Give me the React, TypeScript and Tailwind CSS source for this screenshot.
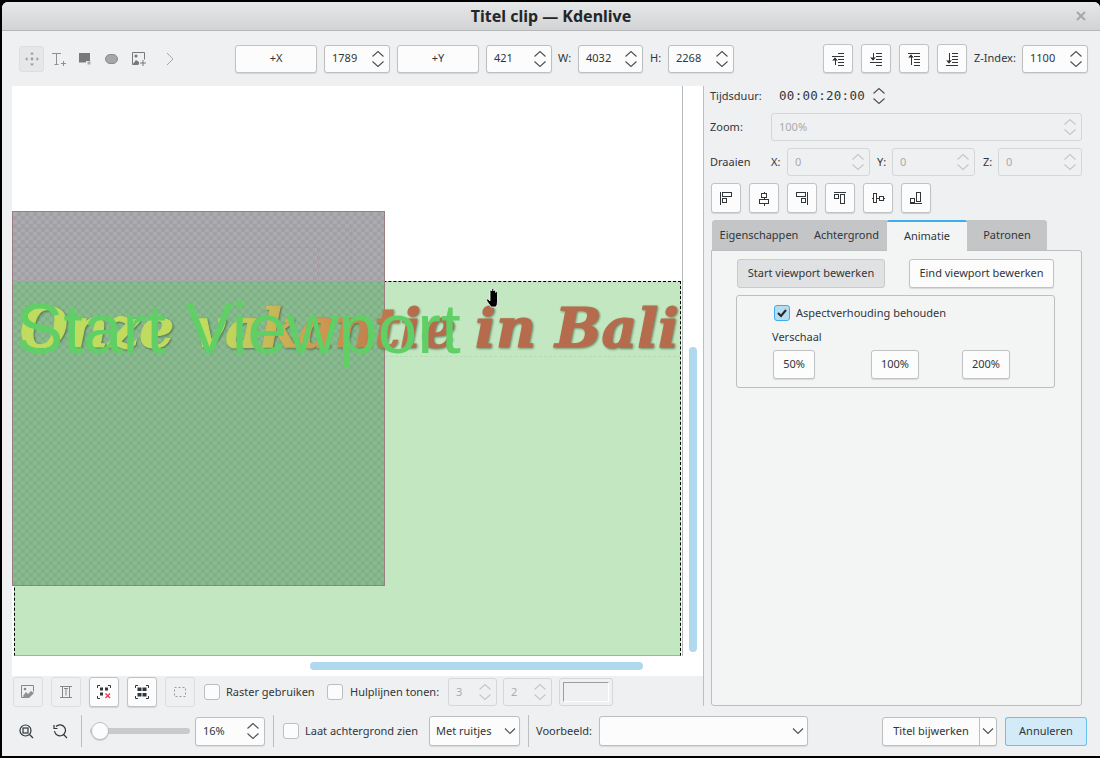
import type { ReactNode } from "react"

function Updown({ muted, tall }: { muted?: boolean; tall?: boolean }) {
  const color = muted ? "#c4c6c8" : "#4d4f50"
  return (
    <svg width="14" height={tall ? 22 : 20} viewBox={tall ? "0 0 14 22" : "0 0 14 20"} fill="none" stroke={color} strokeWidth="1.1" className="shrink-0">
      <path d="M1.5 7.5 7 2.5l5.5 5" />
      <path d={tall ? "M1.5 14.5 7 19.5l5.5-5" : "M1.5 12.5 7 17.5l5.5-5"} />
    </svg>
  )
}

function Chevron({ muted }: { muted?: boolean }) {
  return (
    <svg width="12" height="8" viewBox="0 0 12 8" fill="none" stroke={muted ? "#b9bbbd" : "#4d4f50"} strokeWidth="1.1">
      <path d="M1 1.5 6 6.5l5-5" />
    </svg>
  )
}

function Spin({ value, className, disabled }: { value: string; className: string; disabled?: boolean }) {
  return (
    <div
      className={`flex items-center justify-between rounded-[3px] border pl-[7px] pr-[4px] ${
        disabled ? "border-[#d4d6d7] bg-[#eff0f1] text-[#a9abad]" : "border-[#bcbebf] bg-[#fcfcfc] shadow-[0_1px_1px_rgba(0,0,0,0.08)]"
      } ${className}`}
    >
      <span>{value}</span>
      <Updown muted={disabled} />
    </div>
  )
}

function Button({ children, className }: { children?: ReactNode; className: string }) {
  return (
    <div className={`flex items-center justify-center rounded-[3px] border border-[#c0c2c3] bg-[#fcfcfc] shadow-[0_1px_1px_rgba(0,0,0,0.12)] ${className}`}>
      {children}
    </div>
  )
}

function FlatIcon({ children }: { children: ReactNode }) {
  return <div className="flex h-[30px] w-[30px] items-center justify-center rounded-[3px] border border-[#dcdedf] bg-[#eff0f1]">{children}</div>
}

function Checkbox({ className = "" }: { className?: string }) {
  return <div className={`h-[16px] w-[16px] shrink-0 rounded-[3px] border border-[#bcbebf] bg-[#fcfcfc] ${className}`} />
}

function Separator({ className }: { className: string }) {
  return <div className={`h-[32px] w-px bg-[#bcbebf] ${className}`} />
}

function Ico({ children, size = 18 }: { children: ReactNode; size?: number }) {
  return (
    <svg width={size} height={size} viewBox="0 0 18 18" fill="none" stroke="#31363b" strokeWidth="1" shapeRendering="crispEdges">
      {children}
    </svg>
  )
}

const alignIcons = [
  <><path d="M3.5 3v13" /><rect x="5.5" y="3.5" width="9" height="4" /><rect x="5.5" y="9.500" width="4" height="4" /></>,
  <><path d="M9 2.500v2M9 8.500v2M9 14.500v2" /><rect x="6.500" y="4.500" width="5" height="4" /><rect x="4.500" y="10.500" width="9" height="4" /></>,
  <><path d="M14.500 3v13" /><rect x="3.500" y="3.500" width="9" height="4" /><rect x="8.500" y="9.500" width="4" height="4" /></>,
  <><path d="M3 3.500h12" /><rect x="3.500" y="5.500" width="4" height="4" /><rect x="9.500" y="5.500" width="4" height="9" /></>,
  <><path d="M2.500 9.500h2M7.500 9.500h3M14.500 9.500h1" /><rect x="4.500" y="4.500" width="3" height="9" /><rect x="10.500" y="7.500" width="4" height="4" /></>,
  <><path d="M3 14.500h12" /><rect x="3.500" y="9.500" width="4" height="4" /><rect x="9.500" y="3.500" width="4" height="9" /></>,
]

const layerIcons = [
  { lines: "M9 3.500h6M3 6.500h12M9 9.500h6M9 12.500h6M9 15h6", arrow: "M6 15V8.500", head: "M3.800 10.500 6 7.800l2.200 2.700" },
  { lines: "M9 3.500h6M9 6.500h6M9 9.500h6M3 12.500h12M9 15h6", arrow: "M6 3v6.500", head: "M3.800 7.500 6 10.200l2.200-2.700" },
  { lines: "M3 3.500h12M9 6.500h6M9 9.500h6M9 12.500h6M9 15h6", arrow: "M6 15V5.500", head: "M3.800 7.500 6 4.800l2.200 2.700" },
  { lines: "M9 3.500h6M9 6.500h6M9 9.500h6M9 12.500h6M3 15h12", arrow: "M6 3v9.500", head: "M3.800 10.500 6 13.200l2.200-2.700" },
]

function Toolbar() {
  return (
    <div className="flex h-[55px] items-center pl-[17px]">
      <div className="flex h-[26px] w-[25px] items-center justify-center rounded-[3px] border border-[#dcdedf] bg-[#e6e7e8]">
        <svg width="14" height="14" viewBox="0 0 14 14" fill="#9b9d9f">
          <path d="M7 0l2 2.500H5zM7 14l-2-2.500h4zM0 7l2.500-2v4zM14 7l-2.500 2V5z" />
          <circle cx="7" cy="7" r="1.400" />
        </svg>
      </div>
      <svg width="16" height="16" viewBox="0 0 16 16" fill="none" stroke="#8e9092" className="ml-[7px]">
        <path d="M1 2.500h9M5.500 2.500v11M3.500 13.500h4M10 12.500h5M12.500 10v5" />
      </svg>
      <svg width="14" height="13" viewBox="0 0 14 13" className="ml-[11px]">
        <path d="M1 1h11v8H8v1.500H1z" fill="#77797b" />
        <rect x="9.500" y="9.500" width="3" height="3" fill="#a8aaac" />
      </svg>
      <div className="ml-[13px] h-[10px] w-[13px] rounded-full border border-[#8a8c8e] bg-[#a5a7a9]" />
      <svg width="14" height="14" viewBox="0 0 14 14" className="ml-[14px]">
        <path d="M.5.500h12v7M.5.500v12h6" fill="none" stroke="#77797b" />
        <circle cx="4" cy="4" r="1.600" fill="#77797b" />
        <path d="M1 12l3-4 3 2v2z" fill="#77797b" />
        <path d="M8 11h6M11 8v6" stroke="#77797b" fill="none" />
      </svg>
      <svg width="8" height="14" viewBox="0 0 8 14" fill="none" stroke="#a5a7a9" className="ml-[20px]">
        <path d="M1 1l6 6-6 6" />
      </svg>
      <Button className="ml-[61px] h-[28px] w-[82px]">+X</Button>
      <Spin value="1789" className="ml-[7px] h-[28px] w-[66px]" />
      <Button className="ml-[7px] h-[28px] w-[82px]">+Y</Button>
      <Spin value="421" className="ml-[7px] h-[28px] w-[66px]" />
      <span className="ml-[6px] w-[20px]">W:</span>
      <Spin value="4032" className="h-[28px] w-[65px]" />
      <span className="ml-[7px] w-[18px]">H:</span>
      <Spin value="2268" className="h-[28px] w-[66px]" />
      <div className="ml-[89px] flex gap-[8px]">
        {layerIcons.map((icon, i) => (
          <Button key={i} className="h-[29px] w-[30px]">
            <Ico>
              <path d={icon.lines} />
              <path d={icon.arrow} />
              <path shapeRendering="auto" d={icon.head} fill="#31363b" />
            </Ico>
          </Button>
        ))}
      </div>
      <span className="ml-[7px] w-[48px]">Z-Index:</span>
      <Spin value="1100" className="h-[28px] w-[66px]" />
    </div>
  )
}

function Canvas() {
  return (
    <div className="relative h-[590px] w-[691px] overflow-hidden bg-white">
      <div className="absolute left-[670px] top-0 h-[570px] w-px bg-[#b4b6b8]" />
      <div className="absolute left-[2px] top-[195px] h-[375px] w-[667px] border border-dashed border-black border-b-[#a3b3a3] bg-[#c3e8c1] [border-bottom-style:solid]" />
      <div className="absolute left-0 top-[125px] flex h-[375px] w-[373px] flex-col border border-[#9a7f80]">
        <div className="h-[69px] bg-[#acacb0] bg-[conic-gradient(#a0a0a5_25%,transparent_0_50%,#a0a0a5_0_75%,transparent_0)] bg-[length:8px_8px]" />
        <div className="flex-1 bg-[#8abb90] bg-[conic-gradient(#80b086_25%,transparent_0_50%,#80b086_0_75%,transparent_0)] bg-[length:8px_8px]" />
      </div>
      <div className="absolute left-[1px] top-[161px] h-[34px] w-[306px] border-r border-t border-[#a89298]/40" />
      <div className="absolute left-[1px] top-[142px] h-[53px] w-[339px] border-r border-t border-[#a89298]/30" />
      <div className="absolute left-[373px] top-[270px] w-[296px] border-t border-dashed border-[#b4dcb2]" />
      <div className="absolute left-[8px] top-[202px] bg-[linear-gradient(90deg,#c0dc5e_0%,#c0dc5e_30%,#cf9a50_45%,#b56b4c_60%,#b56b4c_100%)] bg-clip-text font-['DejaVu_Serif'] text-[55px] font-bold italic leading-[80px] whitespace-nowrap text-transparent drop-shadow-[1px_1px_1px_rgba(50,80,50,0.65)] [-webkit-text-stroke:1.2px_transparent]">
        Onze vakantie in Bali
      </div>
      <div className="absolute left-[4px] top-[198px] font-['Liberation_Sans'] text-[71px] leading-[90px] whitespace-nowrap text-[#5fcf66]">
        Start Viewport
      </div>
      <svg width="16" height="20" viewBox="0 0 16 20" className="absolute left-[474px] top-[202px]">
        <path
          d="M5 19c-1-2-4-5-4.500-7-.2-1 1-1.500 2-.5l1.500 1.500V3c0-1.500 1.700-1.500 1.800 0V1.500c0-1.500 2-1.500 2 0V3c0-1.500 1.900-1.500 1.900 0v1.500c0-1.300 1.800-1.300 1.800 0V14c0 2-.5 3.500-1.500 5z"
          fill="#000"
          stroke="#fff"
          strokeWidth="0.8"
        />
      </svg>
      <div className="absolute left-[677px] top-[261px] h-[305px] w-[8px] rounded-full bg-[#b0d8ef]" />
      <div className="absolute left-[298px] top-[576px] h-[8px] w-[333px] rounded-full bg-[#b0d8ef]" />
    </div>
  )
}

function CanvasTools() {
  return (
    <div className="flex h-[32px] items-center pl-[1px]">
      <FlatIcon>
        <svg width="14" height="14" viewBox="0 0 14 14">
          <path d="M.5.500h12v6M.5.500v12h6" fill="none" stroke="#85878a" />
          <path d="M2 11l3-4 2 2 3-3 3 2-5 5H3z" fill="#8e9092" />
          <circle cx="4" cy="4" r="1.300" fill="#85878a" />
        </svg>
      </FlatIcon>
      <div className="ml-[8px]">
        <FlatIcon>
          <svg width="14" height="14" viewBox="0 0 14 14" fill="none" stroke="#85878a">
            <path d="M3.500 1v12M10.500 1v12M1 1.500h12M1 12.500h12M5 3.500h4M7 3.500v7" />
          </svg>
        </FlatIcon>
      </div>
      <Button className="ml-[8px] h-[30px] w-[30px]">
        <svg width="14" height="14" viewBox="0 0 14 14" fill="none" stroke="#31363b">
          <path d="M.5 3V.5H3M11 .5h2.500V3M.5 11v2.500H3" />
          <rect x="3.500" y="3" width="2" height="2" />
          <rect x="8.500" y="3" width="2" height="2" />
          <rect x="3.500" y="8" width="2" height="2" />
          <path d="M8.500 8.500l4.500 4.500M13 8.500l-4.500 4.500" stroke="#ea3b52" strokeWidth="1.300" />
        </svg>
      </Button>
      <Button className="ml-[8px] h-[30px] w-[30px]">
        <svg width="14" height="14" viewBox="0 0 14 14" fill="none" stroke="#31363b">
          <path d="M.5 3V.5H3M11 .5h2.500V3M.5 11v2.500H3M11 13.500h2.500V11" />
          <rect x="3" y="3" width="3" height="2.500" fill="#31363b" />
          <rect x="8" y="3" width="3" height="2.500" fill="#31363b" />
          <rect x="3" y="8.500" width="3" height="2.500" fill="#31363b" />
          <rect x="8" y="8.500" width="3" height="2.500" fill="#31363b" />
        </svg>
      </Button>
      <div className="ml-[8px]">
        <FlatIcon>
          <svg width="14" height="14" viewBox="0 0 14 14" fill="none" stroke="#9b9d9f" strokeDasharray="2 2">
            <rect x="1.500" y="2.500" width="11" height="9" />
          </svg>
        </FlatIcon>
      </div>
      <Checkbox className="ml-[9px]" />
      <span className="ml-[6px] w-[101px]">Raster gebruiken</span>
      <Checkbox />
      <span className="ml-[7px] w-[98px]">Hulplijnen tonen:</span>
      <Spin value="3" disabled className="h-[28px] w-[49px]" />
      <Spin value="2" disabled className="ml-[6px] h-[28px] w-[49px]" />
      <div className="ml-[7px] flex h-[28px] w-[54px] items-center justify-center rounded-[3px] border border-[#d4d6d7]">
        <div className="h-[20px] w-[46px] border border-b-white border-l-[#9a9c9e] border-r-white border-t-[#9a9c9e] bg-[#eff0f1]" />
      </div>
    </div>
  )
}

function SidePanel() {
  return (
    <div className="flex h-[620px] w-[379px] flex-col border-l border-[#bcbebf] pl-[6px]">
      <div className="flex h-[20px] items-center">
        <span className="w-[69px]">Tijdsduur:</span>
        <span className="font-['DejaVu_Sans_Mono'] text-[12.500px] tracking-[0.3px]">00:00:20:00</span>
        <div className="ml-[7px]">
          <Updown />
        </div>
      </div>
      <div className="mt-[7px] flex h-[28px] items-center">
        <span className="w-[61px]">Zoom:</span>
        <Spin value="100%" disabled className="h-[28px] w-[311px]" />
      </div>
      <div className="mt-[7px] flex h-[28px] items-center">
        <span className="w-[61px]">Draaien</span>
        <span className="w-[16px]">X:</span>
        <Spin value="0" disabled className="h-[28px] w-[83px]" />
        <span className="ml-[7px] w-[15px]">Y:</span>
        <Spin value="0" disabled className="h-[28px] w-[83px]" />
        <span className="ml-[8px] w-[15px]">Z:</span>
        <Spin value="0" disabled className="h-[28px] w-[84px]" />
      </div>
      <div className="mt-[7px] flex gap-[8px] pl-[1px]">
        {alignIcons.map((icon, i) => (
          <Button key={i} className="h-[30px] w-[30px]">
            <Ico>{icon}</Ico>
          </Button>
        ))}
      </div>
      <div className="mt-[7px] flex h-[30px] pl-[2px]">
        <div className="flex w-[94px] items-center justify-center rounded-tl-[3px] bg-[#c3c5c7]">Eigenschappen</div>
        <div className="flex w-[81px] items-center justify-center bg-[#c3c5c7]">Achtergrond</div>
        <div className="z-10 -mb-px flex w-[80px] items-center justify-center rounded-t-[2px] border-t-2 border-[#3daee9] bg-[#f3f5f5]">Animatie</div>
        <div className="flex w-[80px] items-center justify-center rounded-tr-[3px] bg-[#c3c5c7]">Patronen</div>
      </div>
      <div className="ml-[1px] w-[371px] flex-1 rounded-b-[3px] rounded-tr-[3px] border border-[#bcbebf] bg-[#f3f5f5] pl-[25px] pt-[8px]">
        <div className="flex gap-[24px]">
          <div className="flex h-[29px] w-[148px] items-center justify-center rounded-[3px] border border-[#c8cacb] bg-[#e0e1e2]">Start viewport bewerken</div>
          <Button className="h-[29px] w-[145px]">Eind viewport bewerken</Button>
        </div>
        <div className="-ml-px mt-[7px] h-[93px] w-[319px] rounded-[3px] border border-[#bcbebf] pl-[35px] pt-[9px]">
          <div className="flex items-center">
            <div className="ml-[2px] flex h-[16px] w-[16px] items-center justify-center rounded-[3px] border border-[#3daee9] bg-[#b6dcf2]">
              <svg width="12" height="12" viewBox="0 0 12 12" fill="none" stroke="#232629" strokeWidth="2">
                <path d="M2 6l3 3 5-6" />
              </svg>
            </div>
            <span className="ml-[6px]">Aspectverhouding behouden</span>
          </div>
          <div className="mt-[7px]">Verschaal</div>
          <div className="mt-[5px] flex">
            <Button className="ml-[1px] h-[29px] w-[42px]">50%</Button>
            <Button className="ml-[56px] h-[29px] w-[48px]">100%</Button>
            <Button className="ml-[43px] h-[29px] w-[48px]">200%</Button>
          </div>
        </div>
      </div>
    </div>
  )
}

function Footer() {
  return (
    <div className="mt-[7px] flex h-[32px] items-center pl-[17px]">
      <svg width="15" height="15" viewBox="0 0 15 15" fill="none" stroke="#31363b" strokeWidth="1.200">
        <circle cx="6.500" cy="6.500" r="5.500" />
        <rect x="4" y="4" width="5" height="5" />
        <path d="M10.500 10.500l3.500 3.500" />
      </svg>
      <svg width="15" height="15" viewBox="0 0 15 15" fill="none" stroke="#31363b" strokeWidth="1.200" className="ml-[19px]">
        <path d="M3 2.500A5.500 5.500 0 1 1 1.500 7" />
        <path d="M1 1v3.500h3.500M10.500 10.500l3.500 3.500" />
      </svg>
      <Separator className="ml-[13px]" />
      <div className="relative ml-[8px] flex h-[18px] w-[100px] items-center">
        <div className="h-[6px] w-full rounded-full bg-[#c8cacb]" />
        <div className="absolute left-[1px] h-[18px] w-[18px] rounded-full border border-[#bcbebf] bg-[#fcfcfc] shadow-[0_1px_1px_rgba(0,0,0,0.15)]" />
      </div>
      <Spin value="16%" className="ml-[5px] h-[29px] w-[70px]" />
      <Separator className="ml-[8px]" />
      <Checkbox className="ml-[9px]" />
      <span className="ml-[6px] w-[124px]">Laat achtergrond zien</span>
      <div className="flex h-[30px] w-[91px] items-center justify-between rounded-[3px] border border-[#bcbebf] bg-[#fcfcfc] pl-[6px] pr-[3px] shadow-[0_1px_1px_rgba(0,0,0,0.1)]">
        <span>Met ruitjes</span>
        <Chevron />
      </div>
      <Separator className="ml-[8px]" />
      <span className="ml-[7px] w-[63px]">Voorbeeld:</span>
      <div className="flex h-[30px] w-[209px] items-center justify-end rounded-[3px] border border-[#bcbebf] bg-[#fcfcfc] pr-[3px] shadow-[0_1px_1px_rgba(0,0,0,0.1)]">
        <Chevron />
      </div>
      <div className="ml-[74px] flex h-[29px] w-[115px] rounded-[3px] border border-[#bcbebf] bg-[#fcfcfc] shadow-[0_1px_1px_rgba(0,0,0,0.1)]">
        <div className="flex w-[97px] items-center justify-center border-r border-[#bcbebf]">Titel bijwerken</div>
        <div className="flex flex-1 items-center justify-center">
          <Chevron />
        </div>
      </div>
      <div className="ml-[8px] flex h-[29px] w-[82px] items-center justify-center rounded-[3px] border border-[#3daee9]/70 bg-[#d3eaf8]">Annuleren</div>
    </div>
  )
}

export default function App() {
  return (
    <div className="h-[758px] w-[1100px] overflow-hidden bg-black pb-[2px] pl-[2px] pt-[2px] font-['Noto_Sans',sans-serif] text-[11px] text-[#31363b]">
      <div className="h-[754px] w-[1098px] overflow-hidden rounded-t-[6px] bg-[#eff0f1]">
        <div className="relative flex h-[29px] items-center justify-center border-b border-[#b4b6b8] bg-[linear-gradient(#e6e7e9,#d2d3d5)]">
          <span className="text-[16px] font-bold text-[#232627]">Titel clip — Kdenlive</span>
          <svg width="10" height="10" viewBox="0 0 10 10" stroke="#a5a7a9" strokeWidth="2" className="absolute right-[14px]">
            <path d="M1 1l8 8M9 1l-8 8" />
          </svg>
        </div>
        <Toolbar />
        <div className="flex pl-[10px]">
          <div>
            <Canvas />
            <CanvasTools />
          </div>
          <SidePanel />
        </div>
        <Footer />
      </div>
    </div>
  )
}
